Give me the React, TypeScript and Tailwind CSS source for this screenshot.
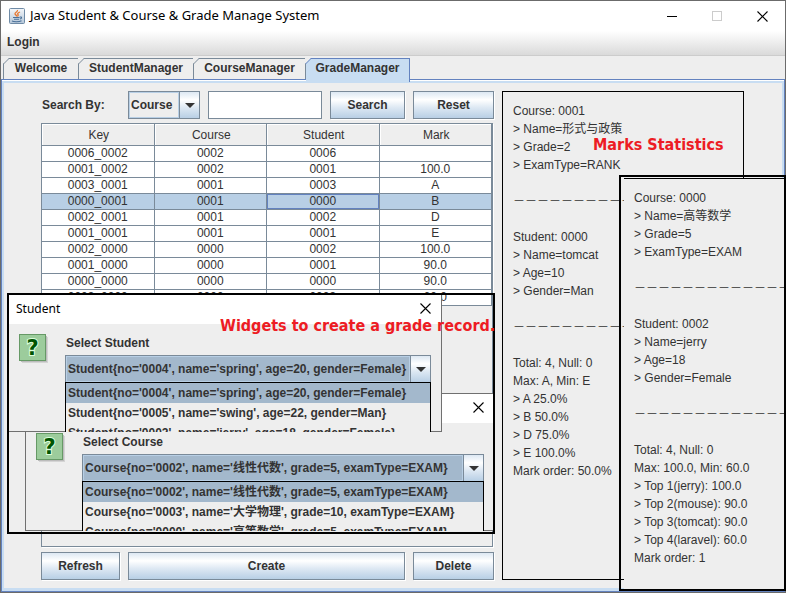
import React from "react";

type GradeRow = { key: string; course: string; student: string; mark: string };

const rows: GradeRow[] = [
  { key: "0006_0002", course: "0002", student: "0006", mark: "" },
  { key: "0001_0002", course: "0002", student: "0001", mark: "100.0" },
  { key: "0003_0001", course: "0001", student: "0003", mark: "A" },
  { key: "0000_0001", course: "0001", student: "0000", mark: "B" },
  { key: "0002_0001", course: "0001", student: "0002", mark: "D" },
  { key: "0001_0001", course: "0001", student: "0001", mark: "E" },
  { key: "0002_0000", course: "0000", student: "0002", mark: "100.0" },
  { key: "0001_0000", course: "0000", student: "0001", mark: "90.0" },
  { key: "0000_0000", course: "0000", student: "0000", mark: "90.0" },
  { key: "0003_0000", course: "0000", student: "0003", mark: "60.0" },
];

const SELECTED_KEY = "0000_0001";
const RULE = "－".repeat(20);

const rankReport = [
  "Course: 0001",
  "> Name=形式与政策",
  "> Grade=2",
  "> ExamType=RANK",
  "",
  RULE,
  "",
  "Student: 0000",
  "> Name=tomcat",
  "> Age=10",
  "> Gender=Man",
  "",
  RULE,
  "",
  "Total: 4, Null: 0",
  "Max: A, Min: E",
  "> A 25.0%",
  "> B 50.0%",
  "> D 75.0%",
  "> E 100.0%",
  "Mark order: 50.0%",
];

const examReport = [
  "Course: 0000",
  "> Name=高等数学",
  "> Grade=5",
  "> ExamType=EXAM",
  "",
  RULE,
  "",
  "Student: 0002",
  "> Name=jerry",
  "> Age=18",
  "> Gender=Female",
  "",
  RULE,
  "",
  "Total: 4, Null: 0",
  "Max: 100.0, Min: 60.0",
  "> Top 1(jerry): 100.0",
  "> Top 2(mouse): 90.0",
  "> Top 3(tomcat): 90.0",
  "> Top 4(laravel): 60.0",
  "Mark order: 1",
];

const students = [
  "Student{no='0004', name='spring', age=20, gender=Female}",
  "Student{no='0005', name='swing', age=22, gender=Man}",
  "Student{no='0002', name='jerry', age=18, gender=Female}",
];

const courses = [
  "Course{no='0002', name='线性代数', grade=5, examType=EXAM}",
  "Course{no='0003', name='大学物理', grade=10, examType=EXAM}",
  "Course{no='0000', name='高等数学', grade=5, examType=EXAM}",
];

function JavaIcon() {
  return (
    <svg width="16" height="16" viewBox="0 0 16 16" aria-hidden="true">
      <defs>
        <linearGradient id="java-bg" x1="0" y1="0" x2="0" y2="1">
          <stop offset="0" stopColor="#f4f7fa" />
          <stop offset="1" stopColor="#b4c6d8" />
        </linearGradient>
      </defs>
      <rect x="0.5" y="0.5" width="15" height="15" rx="1" fill="url(#java-bg)" stroke="#6f8ba6" />
      <path d="M8.500 2C9 4 5.500 4.500 6 6C6.300 7 8 7 7.500 8.500M11 4C8.500 5 8.300 5.700 9 6.500C9.500 7.200 9 8 8.500 8.500" fill="none" stroke="#e8762c" strokeWidth="1.300" />
      <path d="M4 9.500H10.500M5 11.300H10M10.800 9C13.200 8.500 13 10.700 10.800 11M3 13C5 14 10 14 12.500 12.700" fill="none" stroke="#4a7098" strokeWidth="1.100" />
    </svg>
  );
}

function CloseIcon() {
  return (
    <svg width="11" height="11" viewBox="0 0 11 11" stroke="#000" fill="none" aria-hidden="true">
      <path d="M0.500 0.500L10.500 10.500M10.500 0.500L0.500 10.500" strokeWidth="1.100" />
    </svg>
  );
}

function QuestionIcon() {
  return (
    <svg width="32" height="32" viewBox="0 0 32 32" className="shrink-0" aria-hidden="true">
      <rect x="3" y="3" width="26" height="26" fill="#d4d4d4" />
      <rect x="2" y="2" width="26" height="26" fill="#bcbcbc" />
      <rect x="0.500" y="0.500" width="26" height="26" fill="#9ccc9c" stroke="#669966" />
      <text
        x="13.500"
        y="21"
        textAnchor="middle"
        fontSize="21"
        fontWeight="bold"
        fill="#005500"
        stroke="#ddffdd"
        strokeWidth="2"
        style={{ paintOrder: "stroke", fontFamily: "'DejaVu Sans', sans-serif" }}
      >
        ?
      </text>
    </svg>
  );
}

function MetalButton({ className, children }: { className: string; children: React.ReactNode }) {
  return (
    <button
      type="button"
      className={
        "h-7 border border-[#7a8a99] bg-[linear-gradient(#dde8f3,#fff_30%,#dde8f3_60%,#b8cfe5)] font-bold shadow-[1px_1px_0_#fff] " +
        className
      }
    >
      {children}
    </button>
  );
}

function ComboBox({
  id,
  options,
  className,
  fill,
}: {
  id: string;
  options: string[];
  className: string;
  fill: string;
}) {
  return (
    <div className={"relative flex border border-[#7a8a99] " + className}>
      <select
        id={id}
        className={"min-w-0 flex-1 appearance-none border border-[#b8cfe5] px-px font-bold outline-none " + fill}
      >
        {options.map((option) => (
          <option key={option}>{option}</option>
        ))}
      </select>
      <span className="pointer-events-none flex w-5 items-center justify-center border-l border-[#7a8a99] bg-[linear-gradient(#dde8f3,#fff_30%,#dde8f3_60%,#b8cfe5)]">
        <svg width="10" height="5" viewBox="0 0 10 5" aria-hidden="true">
          <path d="M0 0H10L5 5Z" fill="#333" />
        </svg>
      </span>
    </div>
  );
}

function TabCorner({ stroke }: { stroke: string }) {
  return (
    <svg width="6" height="6" viewBox="0 0 6 6" className="absolute -left-px -top-px" aria-hidden="true">
      <path d="M0 0H6L0 6Z" fill="#eee" />
      <path d="M6 0.500L0.500 6" fill="none" stroke={stroke} />
    </svg>
  );
}

function Tab({ label, className }: { label: string; className: string }) {
  return (
    <button
      type="button"
      role="tab"
      aria-selected="false"
      className={"relative h-[21px] border-t border-r border-[#7a8a99] pb-0.5 font-bold " + className}
    >
      <TabCorner stroke="#7a8a99" />
      {label}
    </button>
  );
}

function Report({ lines }: { lines: string[] }) {
  return (
    <div className="overflow-hidden whitespace-nowrap pl-2.5 pt-2.5 leading-[18px]">
      {lines.map((line, i) => (
        <p key={i} className="h-[18px]">
          {line}
        </p>
      ))}
    </div>
  );
}

function InputDialog({
  id,
  title,
  prompt,
  options,
  className,
}: {
  id: string;
  title: string;
  prompt: string;
  options: string[];
  className: string;
}) {
  return (
    <section className={"absolute overflow-hidden " + className}>
      <div className="flex h-full flex-col border border-[#707070] bg-[#eee]">
        <header className="flex h-[29px] shrink-0 items-center justify-between bg-white pb-0.5 pl-[7px] pr-2.5 font-['Noto_Sans',sans-serif] text-black">
          <h2>{title}</h2>
          <button type="button" aria-label={"Close " + title}>
            <CloseIcon />
          </button>
        </header>
        <div className="flex flex-1 gap-3.5 px-2.5 pt-2.5">
          <QuestionIcon />
          <div className="min-w-0 flex-1">
            <label htmlFor={id} className="block h-[21px] pl-px font-bold leading-[18px]">
              {prompt}
            </label>
            <div className="relative">
              <ComboBox id={id} options={options} className="h-7" fill="bg-[#a3b8cc]" />
              <ul className="absolute inset-x-0 top-[27px] border border-black bg-[#eee] font-bold leading-5">
                {options.map((option, i) => (
                  <li
                    key={option}
                    className={"h-5 overflow-hidden whitespace-nowrap pl-0.5 " + (i === 0 ? "bg-[#a3b8cc]" : "")}
                  >
                    {option}
                  </li>
                ))}
              </ul>
            </div>
          </div>
        </div>
      </div>
    </section>
  );
}

export default function App() {
  return (
    <div className="relative flex min-h-screen flex-col border border-[#6b6b6b] bg-[#eee] font-['Liberation_Sans','Noto_Sans_CJK_SC',sans-serif] text-xs text-[#333]">
      <header className="flex h-[30px] items-center bg-white pl-2 pr-[17px] text-black">
        <JavaIcon />
        <h1 className="flex-1 pl-[5px] font-['Noto_Sans',sans-serif] text-[13px]">
          Java Student &amp; Course &amp; Grade Manage System
        </h1>
        <div className="flex items-center gap-[35px]">
          <button type="button" aria-label="Minimize" className="h-px w-2.5 bg-black" />
          <button type="button" aria-label="Maximize" className="h-2.5 w-2.5 border border-[#ccc]" />
          <button type="button" aria-label="Close">
            <CloseIcon />
          </button>
        </div>
      </header>

      <nav className="flex h-[25px] items-center border-b border-[#ccc] bg-linear-to-b from-white to-[#dadada] px-1.5 pb-0.5">
        <button type="button" className="font-bold">
          Login
        </button>
      </nav>

      <div role="tablist" className="flex pl-0.5 pt-0.5">
        <Tab label="Welcome" className="w-[76px] border-l" />
        <Tab label="StudentManager" className="w-[115px]" />
        <Tab label="CourseManager" className="w-[112px]" />
        <button
          type="button"
          role="tab"
          aria-selected="true"
          className="relative z-10 -mb-[3px] h-6 w-[104px] border-t border-r border-[#6382bf] bg-[#c8ddf2] pb-[5px] font-bold"
        >
          <TabCorner stroke="#6382bf" />
          GradeManager
        </button>
      </div>

      <main className="flex flex-1 flex-col border border-[#6382bf] bg-white pt-px">
        <div className="flex flex-1 gap-2 border-2 border-b-[3px] border-[#c8ddf2] bg-[#eee] pb-2 pl-[37px] pr-[38px] pt-2">
          <div className="flex min-w-0 flex-1 flex-col">
            <form className="flex gap-2">
              <label htmlFor="search-by" className="w-[79px] pl-px font-bold leading-7">
                Search By:
              </label>
              <ComboBox id="search-by" options={["Course", "Student"]} className="h-7 w-[72px]" fill="bg-[#eee]" />
              <input
                aria-label="Search text"
                className="h-7 min-w-0 flex-1 border border-[#7a8a99] bg-white px-1 outline-none"
              />
              <MetalButton className="w-[75px]">Search</MetalButton>
              <MetalButton className="w-[81px]">Reset</MetalButton>
            </form>

            <div className="mb-[5px] mr-px mt-1 flex-1 border border-[#7a8a99] shadow-[1px_1px_0_#fff]">
              <table className="w-full table-fixed border-separate border-spacing-0 text-center leading-[15px]">
                <thead>
                  <tr>
                    {["Key", "Course", "Student", "Mark"].map((name) => (
                      <th
                        key={name}
                        className="h-[22px] border-b border-r border-[#7a8a99] pb-0 pl-0.5 pr-0 pt-px font-normal shadow-[inset_1px_1px_0_#fff]"
                      >
                        {name}
                      </th>
                    ))}
                  </tr>
                </thead>
                <tbody>
                  {rows.map((row) => {
                    const selected = row.key === SELECTED_KEY;
                    return (
                      <tr key={row.key} className={selected ? "bg-[#b8cfe5]" : "bg-white"}>
                        <td className="h-4 border-b border-r border-[#7a8a99] p-0">{row.key}</td>
                        <td className="h-4 border-b border-r border-[#7a8a99] p-0">{row.course}</td>
                        <td
                          className={
                            "h-4 border-b border-r border-[#7a8a99] p-0 " +
                            (selected ? "shadow-[inset_0_0_0_1px_#6382bf]" : "")
                          }
                        >
                          {row.student}
                        </td>
                        <td className="h-4 border-b border-r border-[#7a8a99] p-0">{row.mark}</td>
                      </tr>
                    );
                  })}
                </tbody>
              </table>
            </div>

            <div className="flex gap-2">
              <MetalButton className="w-[79px]">Refresh</MetalButton>
              <MetalButton className="flex-1">Create</MetalButton>
              <MetalButton className="w-[81px]">Delete</MetalButton>
            </div>
          </div>

          <aside className="w-[242px] border border-black">
            <Report lines={rankReport} />
          </aside>
        </div>
      </main>

      <div className="absolute left-1.5 top-[292px] h-[241px] w-[488px] overflow-hidden border-2 border-black">
        <InputDialog
          id="course-choice"
          title="Input"
          prompt="Select Course"
          options={courses}
          className="left-4 top-[98px] h-[138px] w-[470px]"
        />
        <InputDialog
          id="student-choice"
          title="Student"
          prompt="Select Student"
          options={students}
          className="-left-px -top-px h-[138px] w-[434px]"
        />
      </div>
      <p className="absolute left-[219px] top-[313px] font-['DejaVu_Sans_Condensed','DejaVu_Sans',sans-serif] text-base font-bold leading-6 text-[#ed1c24]">
        Widgets to create a grade record.
      </p>

      <aside className="absolute -right-px top-[174px] flex h-[416px] w-[167px] border-2 border-black pl-[3px] pt-px">
        <div className="min-w-0 flex-1 border-t border-black bg-[#eee]">
          <Report lines={examReport} />
        </div>
      </aside>
      <p className="absolute left-[592px] top-[132px] font-['DejaVu_Sans_Condensed','DejaVu_Sans',sans-serif] text-base font-bold leading-6 text-[#ed1c24]">
        Marks Statistics
      </p>
    </div>
  );
}
